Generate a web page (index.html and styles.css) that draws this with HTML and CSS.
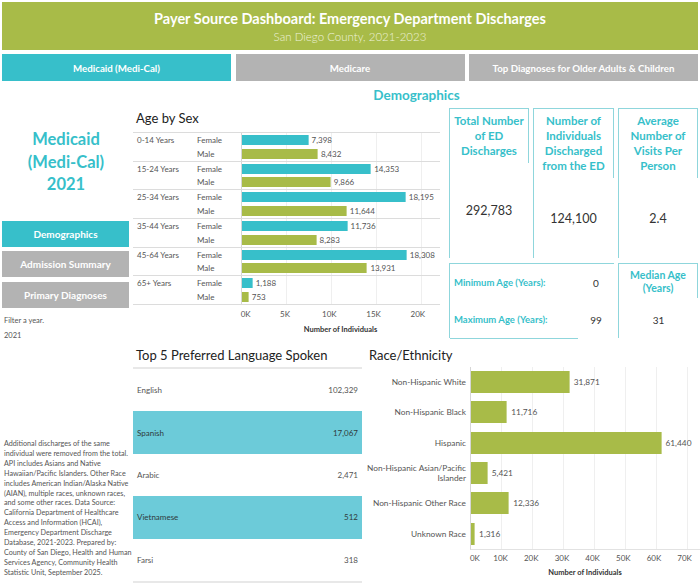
FILE: index.html
```html
<!DOCTYPE html>
<html lang="en">
<head>
<meta charset="utf-8">
<title>Payer Source Dashboard</title>
<link rel="stylesheet" href="styles.css">
</head>
<body>
<div class="page">
  <header class="banner">
    <div class="banner-title">Payer Source Dashboard: Emergency Department Discharges</div>
    <div class="banner-sub">San Diego County, 2021-2023</div>
  </header>

  <nav class="tabs">
    <div class="tab tab-active">Medicaid (Medi-Cal)</div>
    <div class="tab">Medicare</div>
    <div class="tab">Top Diagnoses for Older Adults &amp; Children</div>
  </nav>

  <section class="top">
    <aside class="side">
      <div class="side-title">Medicaid<br>(Medi-Cal)<br>2021</div>
      <div class="side-buttons">
        <div class="side-btn side-btn-active">Demographics</div>
        <div class="side-btn">Admission Summary</div>
        <div class="side-btn">Primary Diagnoses</div>
      </div>
      <div class="filter">
        <div class="filter-line">Filter a year.</div>
        <div class="filter-line">2021</div>
      </div>
    </aside>

    <h2 class="section-title">Demographics</h2>

    <div class="agesex">
      <div class="chart-title">Age by Sex</div>
      <div class="age-table">
        <div class="age-group">
          <div class="age-label">0-14 Years</div>
          <div class="sex-col"><div class="sex-label">Female</div><div class="sex-label">Male</div></div>
          <div class="bars-col">
            <div class="bar-row"><div class="bar bar-f" style="width:66.6px"></div><span class="bar-val">7,398</span></div>
            <div class="bar-row"><div class="bar bar-m" style="width:75.9px"></div><span class="bar-val">8,432</span></div>
          </div>
        </div>
        <div class="age-group">
          <div class="age-label">15-24 Years</div>
          <div class="sex-col"><div class="sex-label">Female</div><div class="sex-label">Male</div></div>
          <div class="bars-col">
            <div class="bar-row"><div class="bar bar-f" style="width:129.2px"></div><span class="bar-val">14,353</span></div>
            <div class="bar-row"><div class="bar bar-m" style="width:88.8px"></div><span class="bar-val">9,866</span></div>
          </div>
        </div>
        <div class="age-group">
          <div class="age-label">25-34 Years</div>
          <div class="sex-col"><div class="sex-label">Female</div><div class="sex-label">Male</div></div>
          <div class="bars-col">
            <div class="bar-row"><div class="bar bar-f" style="width:163.8px"></div><span class="bar-val">18,195</span></div>
            <div class="bar-row"><div class="bar bar-m" style="width:104.8px"></div><span class="bar-val">11,644</span></div>
          </div>
        </div>
        <div class="age-group">
          <div class="age-label">35-44 Years</div>
          <div class="sex-col"><div class="sex-label">Female</div><div class="sex-label">Male</div></div>
          <div class="bars-col">
            <div class="bar-row"><div class="bar bar-f" style="width:105.6px"></div><span class="bar-val">11,736</span></div>
            <div class="bar-row"><div class="bar bar-m" style="width:74.5px"></div><span class="bar-val">8,283</span></div>
          </div>
        </div>
        <div class="age-group">
          <div class="age-label">45-64 Years</div>
          <div class="sex-col"><div class="sex-label">Female</div><div class="sex-label">Male</div></div>
          <div class="bars-col">
            <div class="bar-row"><div class="bar bar-f" style="width:164.8px"></div><span class="bar-val">18,308</span></div>
            <div class="bar-row"><div class="bar bar-m" style="width:125.4px"></div><span class="bar-val">13,931</span></div>
          </div>
        </div>
        <div class="age-group age-group-last">
          <div class="age-label">65+ Years</div>
          <div class="sex-col"><div class="sex-label">Female</div><div class="sex-label">Male</div></div>
          <div class="bars-col">
            <div class="bar-row"><div class="bar bar-f" style="width:10.7px"></div><span class="bar-val">1,188</span></div>
            <div class="bar-row"><div class="bar bar-m" style="width:6.8px"></div><span class="bar-val">753</span></div>
          </div>
        </div>
      </div>
      <div class="age-axis">
        <span class="tick tick-first">0K</span><span class="tick">5K</span><span class="tick">10K</span><span class="tick">15K</span><span class="tick">20K</span>
      </div>
      <div class="axis-title age-axis-title">Number of Individuals</div>
    </div>

    <div class="stats">
      <div class="cards">
        <div class="card">
          <div class="card-title">Total Number<br>of ED<br>Discharges</div>
          <div class="card-value">292,783</div>
        </div>
        <div class="card card-mid">
          <div class="card-title">Number of<br>Individuals<br>Discharged<br>from the ED</div>
          <div class="card-value">124,100</div>
        </div>
        <div class="card">
          <div class="card-title">Average<br>Number of<br>Visits Per<br>Person</div>
          <div class="card-value">2.4</div>
        </div>
      </div>
      <div class="ages">
        <div class="minmax">
          <div class="mm-labels">
            <div class="mm-cell">Minimum Age (Years):</div>
            <div class="mm-cell">Maximum Age (Years):</div>
          </div>
          <div class="mm-values">
            <div class="mm-cell mm-num">0</div>
            <div class="mm-cell mm-num">99</div>
          </div>
        </div>
        <div class="median">
          <div class="median-title">Median Age<br>(Years)</div>
          <div class="median-value">31</div>
        </div>
      </div>
    </div>
  </section>

  <section class="bottom">
    <p class="note">Additional discharges of the same<br>individual were removed from the total.<br>API includes Asians and Native<br>Hawaiian/Pacific Islanders. Other Race<br>includes American Indian/Alaska Native<br>(AIAN), multiple races, unknown races,<br>and some other races. Data Source:<br>California Department of Healthcare<br>Access and Information (HCAI),<br>Emergency Department Discharge<br>Database, 2021-2023. Prepared by:<br>County of San Diego, Health and Human<br>Services Agency, Community Health<br>Statistic Unit, September 2025.</p>

    <div class="lang">
      <div class="chart-title bottom-title">Top 5 Preferred Language Spoken</div>
      <div class="lang-table">
        <div class="lang-row"><span>English</span><span>102,329</span></div>
        <div class="lang-row lang-hl"><span>Spanish</span><span>17,067</span></div>
        <div class="lang-row"><span>Arabic</span><span>2,471</span></div>
        <div class="lang-row lang-hl"><span>Vietnamese</span><span>512</span></div>
        <div class="lang-row"><span>Farsi</span><span>318</span></div>
      </div>
    </div>

    <div class="race">
      <div class="chart-title bottom-title race-title">Race/Ethnicity</div>
      <div class="race-plot">
        <div class="race-labels">
          <div class="race-label">Non-Hispanic White</div>
          <div class="race-label">Non-Hispanic Black</div>
          <div class="race-label">Hispanic</div>
          <div class="race-label">Non-Hispanic Asian/Pacific<br>Islander</div>
          <div class="race-label">Non-Hispanic Other Race</div>
          <div class="race-label">Unknown Race</div>
        </div>
        <div class="race-bars">
          <div class="race-row"><div class="rbar" style="width:98.8px"></div><span class="bar-val">31,871</span></div>
          <div class="race-row"><div class="rbar" style="width:36.3px"></div><span class="bar-val">11,716</span></div>
          <div class="race-row"><div class="rbar" style="width:190.5px"></div><span class="bar-val">61,440</span></div>
          <div class="race-row"><div class="rbar" style="width:16.8px"></div><span class="bar-val">5,421</span></div>
          <div class="race-row"><div class="rbar" style="width:38.2px"></div><span class="bar-val">12,336</span></div>
          <div class="race-row"><div class="rbar" style="width:4.1px"></div><span class="bar-val">1,316</span></div>
        </div>
      </div>
      <div class="race-axis">
        <span class="rtick rtick-first">0K</span><span class="rtick">10K</span><span class="rtick">20K</span><span class="rtick">30K</span><span class="rtick">40K</span><span class="rtick">50K</span><span class="rtick">60K</span><span class="rtick">70K</span>
      </div>
      <div class="axis-title race-axis-title">Number of Individuals</div>
    </div>
  </section>
</div>
</body>
</html>
```

FILE: styles.css
```css
* { box-sizing: border-box; }

html, body {
  margin: 0;
  padding: 0;
  background: #ffffff;
}

body {
  font-family: "Lato", "Open Sans", "Liberation Sans", sans-serif;
  color: #555555;
}

.page {
  width: 700px;
  height: 583px;
  overflow: hidden;
  padding-top: 2px;
}

/* ---------- banner ---------- */
.banner {
  margin: 0 2px;
  height: 48px;
  background: #a8bb48;
  text-align: center;
  padding-top: 8px;
}
.banner-title {
  color: #ffffff;
  font-weight: 700;
  font-size: 14.5px;
  line-height: 18px;
}
.banner-sub {
  color: #eef2dc;
  font-weight: 300;
  font-size: 11.5px;
  line-height: 15px;
  margin-top: 1px;
}

/* ---------- tabs ---------- */
.tabs {
  margin: 4px 2px 0;
  height: 27px;
  display: grid;
  grid-template-columns: 1fr 1fr 1fr;
  column-gap: 4.5px;
}
.tab {
  background: #b3b3b3;
  color: #ffffff;
  font-weight: 700;
  font-size: 9.7px;
  display: flex;
  align-items: center;
  justify-content: center;
}
.tab-active { background: #37bfca; }

/* ---------- top section ---------- */
.top {
  display: grid;
  grid-template-columns: 133px 307px 260px;
  grid-template-rows: 22px 237px;
}

.side {
  grid-column: 1;
  grid-row: 1 / span 2;
  padding-top: 47px;
}
.side-title {
  color: #37bfca;
  font-weight: 700;
  font-size: 16.5px;
  line-height: 22.5px;
  text-align: center;
  padding-right: 1px;
}
.side-buttons {
  margin: 25px 0 0 2px;
  width: 127px;
  display: flex;
  flex-direction: column;
  gap: 4.5px;
}
.side-btn {
  height: 26px;
  background: #b3b3b3;
  color: #ffffff;
  font-weight: 700;
  font-size: 10px;
  display: flex;
  align-items: center;
  justify-content: center;
}
.side-btn-active { background: #37bfca; }

.filter {
  padding: 5px 0 0 4px;
}
.filter-line {
  font-size: 7.5px;
  line-height: 15px;
  color: #555555;
}

.section-title {
  grid-column: 2 / span 2;
  grid-row: 1;
  margin: 0;
  padding-top: 6px;
  text-align: center;
  color: #37bfca;
  font-weight: 700;
  font-size: 13.5px;
  line-height: 16px;
}

/* ---------- age by sex ---------- */
.agesex {
  grid-column: 2;
  grid-row: 2;
}
.chart-title {
  height: 29px;
  padding: 7px 0 0 3px;
  font-size: 13px;
  line-height: 16px;
  color: #222222;
}
.bottom-title {
  height: 27px;
}
.age-table {
  border-bottom: 1px solid #dcdcdc;
}
.age-group {
  display: grid;
  grid-template-columns: 60px 48px 199px;
  height: 28.67px;
  border-top: 1px solid #dcdcdc;
}
.age-label, .sex-label {
  font-size: 8px;
  color: #555555;
  white-space: nowrap;
}
.age-label {
  padding-left: 4px;
  line-height: 14px;
}
.sex-label {
  padding-left: 4px;
  height: 13.8px;
  line-height: 14px;
}
.bars-col {
  border-left: 1px solid #d6d6d6;
  background-image: repeating-linear-gradient(to right, transparent 0, transparent 44px, #efefef 44px, #efefef 45px);
  display: flex;
  flex-direction: column;
}
.bar-row {
  height: 13.8px;
  display: flex;
  align-items: center;
}
.bar {
  height: 10px;
  flex: none;
}
.bar-f { background: #37bfca; box-shadow: inset -1px 0 0 #7fd6dc; }
.bar-m { background: #a8bb48; box-shadow: inset -1px 0 0 #c9d58f; }
.bar-val {
  font-size: 8px;
  color: #555555;
  margin-left: 3px;
  white-space: nowrap;
}
.age-axis {
  display: flex;
  padding-left: 85.5px;
  height: 19px;
  align-items: center;
}
.tick {
  width: 45px;
  text-align: center;
  font-size: 8px;
  color: #555555;
}
.tick-first { padding-left: 10px; }
.axis-title {
  font-size: 7.5px;
  color: #333333;
  font-weight: 700;
  text-align: center;
}
.age-axis-title {
  padding-left: 108px;
  line-height: 10px;
  margin-top: 1px;
}

/* ---------- stats ---------- */
.stats {
  grid-column: 3;
  grid-row: 2;
  padding: 5px 0 0 9px;
}
.cards {
  display: flex;
  gap: 4px;
  height: 150px;
}
.card {
  width: 80px;
  border-left: 1px solid #8fd6dc;
  border-top: 1px solid #8fd6dc;
  display: flex;
  flex-direction: column;
}
.card-mid { width: 81px; }
.card-title {
  border-right: 1px solid #8fd6dc;
  padding: 4px 0 5px;
  text-align: center;
  color: #37bfca;
  font-weight: 700;
  font-size: 11.5px;
  line-height: 15px;
  white-space: nowrap;
}
.card-value {
  flex: 1;
  display: flex;
  align-items: center;
  justify-content: center;
  font-size: 12.5px;
  color: #333333;
  margin-right: 1px;
}
.ages {
  display: flex;
  gap: 4px;
  margin-top: 5px;
  height: 75px;
}
.minmax {
  width: 165px;
  border-left: 1px solid #8fd6dc;
  border-top: 1px solid #8fd6dc;
  display: grid;
  grid-template-columns: 128px 36px;
}
.mm-labels {
  border-bottom: 1px solid #8fd6dc;
  display: flex;
  flex-direction: column;
}
.mm-values {
  display: flex;
  flex-direction: column;
}
.mm-cell {
  height: 37px;
  display: flex;
  align-items: center;
  padding-left: 4px;
  color: #37bfca;
  font-weight: 700;
  font-size: 9.5px;
  white-space: nowrap;
}
.mm-num {
  justify-content: center;
  padding-left: 0;
  color: #333333;
  font-weight: 400;
  font-size: 10px;
}
.median {
  width: 80px;
  border-left: 1px solid #8fd6dc;
  border-top: 1px solid #8fd6dc;
  display: flex;
  flex-direction: column;
}
.median-title {
  border-right: 1px solid #8fd6dc;
  height: 34px;
  padding-top: 5px;
  text-align: center;
  color: #37bfca;
  font-weight: 700;
  font-size: 10.5px;
  line-height: 13px;
}
.median-value {
  flex: 1;
  display: flex;
  align-items: center;
  justify-content: center;
  font-size: 10px;
  color: #333333;
  padding-top: 4px;
}

/* ---------- bottom section ---------- */
.bottom {
  display: grid;
  grid-template-columns: 133px 232px 335px;
  height: 243px;
}
.note {
  margin: 0;
  padding: 99px 0 0 4px;
  font-size: 7.2px;
  line-height: 9.9px;
  color: #555555;
  white-space: nowrap;
}

.lang {
  padding-right: 3px;
}
.lang-table {
  border-top: 2px solid #e8e8e8;
  border-bottom: 2px solid #e8e8e8;
}
.lang-row {
  height: 42.4px;
  display: flex;
  justify-content: space-between;
  align-items: center;
  padding: 0 4px;
  font-size: 8px;
  color: #555555;
}
.lang-hl {
  background: #6ccbd9;
  color: #2f3a3c;
}

.race-title { padding-left: 4px; }
.race-plot {
  display: grid;
  grid-template-columns: 105px 230px;
}
.race-labels, .race-bars {
  display: flex;
  flex-direction: column;
}
.race-label {
  height: 30.3px;
  display: flex;
  align-items: center;
  justify-content: flex-end;
  text-align: right;
  padding-right: 4px;
  font-size: 8.3px;
  line-height: 10px;
  color: #555555;
  white-space: nowrap;
}
.race-bars {
  border-left: 1px solid #d6d6d6;
  border-bottom: 1px solid #e2e2e2;
  background-image: repeating-linear-gradient(to right, transparent 0, transparent 30px, #efefef 30px, #efefef 31px);
}
.race-row {
  height: 30.3px;
  display: flex;
  align-items: center;
}
.rbar {
  height: 22px;
  background: #a8bb48;
  box-shadow: inset -1px 0 0 #c9d58f;
  flex: none;
}
.race-row .bar-val {
  font-size: 8.3px;
  margin-left: 4px;
}
.race-axis {
  display: flex;
  padding-left: 89.5px;
  height: 17px;
  align-items: center;
}
.rtick {
  width: 31px;
  text-align: center;
  font-size: 8px;
  color: #555555;
}
.rtick-first { padding-left: 10px; }
.race-axis-title {
  padding-left: 105px;
  line-height: 10px;
  margin-top: 1px;
}
```
